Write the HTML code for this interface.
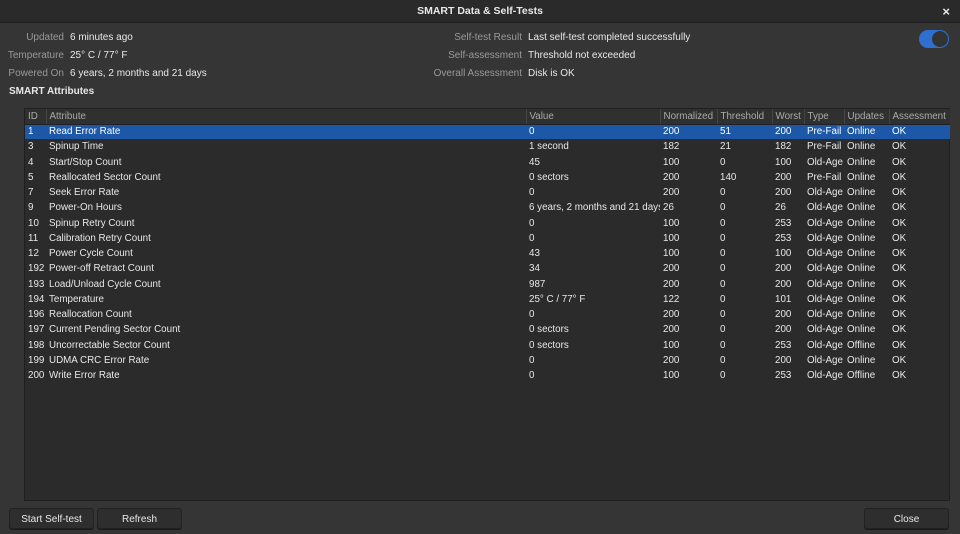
<!DOCTYPE html><html><head><style>
*{margin:0;padding:0;box-sizing:border-box}
body{width:960px;height:534px;background:#353535;font-family:"Liberation Sans",sans-serif;font-size:10px;color:#e8e8e8;position:relative;overflow:hidden}
.tb{position:absolute;left:0;top:0;width:960px;height:23px;background:#2a2a2a;border-bottom:1px solid #1e1e1e;text-align:center;line-height:23px;font-weight:bold;font-size:10.5px}
.x{position:absolute;right:10px;top:0;font-size:13px;font-weight:bold}
.l{position:absolute;color:#999;text-align:right}
.v{position:absolute}
.tog{position:absolute;left:919px;top:30px;width:30px;height:18px;border-radius:9px;background:#2f6fd0}
.tog div{position:absolute;right:1px;top:1px;width:16px;height:16px;border-radius:8px;background:#333}
.tbl{position:absolute;left:24px;top:108px;width:926px;height:393px;background:#2b2b2b;border:1px solid #1f1f1f}
table{border-collapse:collapse;width:925px;table-layout:fixed;font-size:9.8px}
th{height:15px;text-align:left;font-weight:normal;color:#aaa;background:#303030;border-left:1px solid #444;padding-left:3px;border-bottom:1px solid #222}
th:first-child{border-left:none}
td{height:15.25px;padding-left:3px;white-space:nowrap;overflow:hidden}
tr.s td{background:#1c57a8;color:#fff}
.btn{position:absolute;top:508px;height:21px;background:#2e2e2e;border:1px solid #222;border-radius:3px;text-align:center;line-height:21px;box-shadow:0 1px 0 #1a1a1a}
</style></head><body>
<div class="tb">SMART Data &amp; Self-Tests<span class="x">×</span></div>
<div class="l" style="left:0;width:64px;top:32px">Updated</div><div class="v" style="left:70px;top:32px">6 minutes ago</div>
<div class="l" style="left:0;width:64px;top:50px">Temperature</div><div class="v" style="left:70px;top:50px">25° C / 77° F</div>
<div class="l" style="left:0;width:64px;top:68px">Powered On</div><div class="v" style="left:70px;top:68px">6 years, 2 months and 21 days</div>
<div class="l" style="left:400px;width:122px;top:32px">Self-test Result</div><div class="v" style="left:528px;top:32px">Last self-test completed successfully</div>
<div class="l" style="left:400px;width:122px;top:50px">Self-assessment</div><div class="v" style="left:528px;top:50px">Threshold not exceeded</div>
<div class="l" style="left:400px;width:122px;top:68px">Overall Assessment</div><div class="v" style="left:528px;top:68px">Disk is OK</div>
<div class="tog"><div></div></div>
<div class="v" style="left:9px;top:86px;font-weight:bold">SMART Attributes</div>
<div class="tbl"><table>
<colgroup><col style="width:21px"><col style="width:480px"><col style="width:134px"><col style="width:57px"><col style="width:55px"><col style="width:32px"><col style="width:40px"><col style="width:45px"><col style="width:61px"></colgroup>
<tr><th>ID</th><th>Attribute</th><th>Value</th><th>Normalized</th><th>Threshold</th><th>Worst</th><th>Type</th><th>Updates</th><th>Assessment</th></tr>
<tr class="s"><td>1</td><td>Read Error Rate</td><td>0</td><td>200</td><td>51</td><td>200</td><td>Pre-Fail</td><td>Online</td><td>OK</td></tr>
<tr><td>3</td><td>Spinup Time</td><td>1 second</td><td>182</td><td>21</td><td>182</td><td>Pre-Fail</td><td>Online</td><td>OK</td></tr>
<tr><td>4</td><td>Start/Stop Count</td><td>45</td><td>100</td><td>0</td><td>100</td><td>Old-Age</td><td>Online</td><td>OK</td></tr>
<tr><td>5</td><td>Reallocated Sector Count</td><td>0 sectors</td><td>200</td><td>140</td><td>200</td><td>Pre-Fail</td><td>Online</td><td>OK</td></tr>
<tr><td>7</td><td>Seek Error Rate</td><td>0</td><td>200</td><td>0</td><td>200</td><td>Old-Age</td><td>Online</td><td>OK</td></tr>
<tr><td>9</td><td>Power-On Hours</td><td>6 years, 2 months and 21 days</td><td>26</td><td>0</td><td>26</td><td>Old-Age</td><td>Online</td><td>OK</td></tr>
<tr><td>10</td><td>Spinup Retry Count</td><td>0</td><td>100</td><td>0</td><td>253</td><td>Old-Age</td><td>Online</td><td>OK</td></tr>
<tr><td>11</td><td>Calibration Retry Count</td><td>0</td><td>100</td><td>0</td><td>253</td><td>Old-Age</td><td>Online</td><td>OK</td></tr>
<tr><td>12</td><td>Power Cycle Count</td><td>43</td><td>100</td><td>0</td><td>100</td><td>Old-Age</td><td>Online</td><td>OK</td></tr>
<tr><td>192</td><td>Power-off Retract Count</td><td>34</td><td>200</td><td>0</td><td>200</td><td>Old-Age</td><td>Online</td><td>OK</td></tr>
<tr><td>193</td><td>Load/Unload Cycle Count</td><td>987</td><td>200</td><td>0</td><td>200</td><td>Old-Age</td><td>Online</td><td>OK</td></tr>
<tr><td>194</td><td>Temperature</td><td>25° C / 77° F</td><td>122</td><td>0</td><td>101</td><td>Old-Age</td><td>Online</td><td>OK</td></tr>
<tr><td>196</td><td>Reallocation Count</td><td>0</td><td>200</td><td>0</td><td>200</td><td>Old-Age</td><td>Online</td><td>OK</td></tr>
<tr><td>197</td><td>Current Pending Sector Count</td><td>0 sectors</td><td>200</td><td>0</td><td>200</td><td>Old-Age</td><td>Online</td><td>OK</td></tr>
<tr><td>198</td><td>Uncorrectable Sector Count</td><td>0 sectors</td><td>100</td><td>0</td><td>253</td><td>Old-Age</td><td>Offline</td><td>OK</td></tr>
<tr><td>199</td><td>UDMA CRC Error Rate</td><td>0</td><td>200</td><td>0</td><td>200</td><td>Old-Age</td><td>Online</td><td>OK</td></tr>
<tr><td>200</td><td>Write Error Rate</td><td>0</td><td>100</td><td>0</td><td>253</td><td>Old-Age</td><td>Offline</td><td>OK</td></tr>
</table></div>
<div class="btn" style="left:9px;width:85px">Start Self-test</div>
<div class="btn" style="left:97px;width:85px">Refresh</div>
<div class="btn" style="left:864px;width:85px">Close</div>
</body></html>
